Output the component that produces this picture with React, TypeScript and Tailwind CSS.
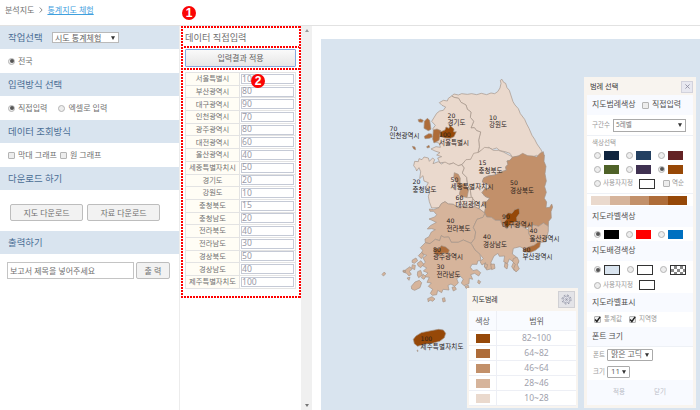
import React from "react";

const SANS = "font-['Noto_Sans','Noto_Sans_CJK_KR',sans-serif]";

function Radio({ on = false }: { on?: boolean }) {
  return (
    <span className="flex size-[7px] shrink-0 items-center justify-center rounded-full border border-[#b4b4b4] bg-[#ededed]">
      {on && <span className="size-[4px] shrink-0 rounded-full bg-[#555]" />}
    </span>
  );
}

function Check({ on = false }: { on?: boolean }) {
  return (
    <span className="flex size-[7px] shrink-0 items-center justify-center rounded-[1px] border border-[#b4b4b4] bg-[#ededed]">
      {on && (
        <svg viewBox="0 0 8 8" className="size-[7px] shrink-0">
          <path d="M1.2 4 3.3 6.3 7 1" fill="none" stroke="#222" strokeWidth="1.6" />
        </svg>
      )}
    </span>
  );
}

function Caret() {
  return (
    <svg viewBox="0 0 4 4" className="size-[4px] shrink-0">
      <path d="M0 .3H4L2 4Z" fill="#333" />
    </svg>
  );
}

function Band({ children, h }: { children: React.ReactNode; h: string }) {
  return (
    <div className={`flex shrink-0 items-center bg-[#d9e4ef] pl-2 text-[9.4px] text-[#4a6d94] ${h}`}>
      {children}
    </div>
  );
}

function Button({ children, w }: { children: React.ReactNode; w: string }) {
  return (
    <button className={`flex h-[17px] items-center justify-center rounded-[2px] border border-[#bdbdbd] bg-[#f2f2f2] text-[8px] text-[#707070] ${w}`}>
      {children}
    </button>
  );
}

function Sidebar() {
  return (
    <aside className="flex w-[180px] shrink-0 flex-col border-r border-[#ececec] text-[8px] text-[#707070]">
      <Band h="h-[23px]">
        <span className="w-[44px]">작업선택</span>
        <span className="flex h-[11px] w-[67px] items-center justify-between border border-[#b9b9b9] bg-white pr-[3px] pl-[2px] text-[8px] text-[#606060]">
          시도 통계체험 <Caret />
        </span>
      </Band>
      <div className="flex h-[24px] items-center gap-[3px] pl-[8px]"><Radio on />전국</div>
      <Band h="h-[23px]">입력방식 선택</Band>
      <div className="flex h-[24px] items-center gap-[3px] pl-[8px]">
        <Radio on />직접입력
        <span className="w-[5px]" />
        <Radio />엑셀로 입력
      </div>
      <Band h="h-[23px]">데이터 조회방식</Band>
      <div className="flex h-[24px] items-center gap-[3px] pl-[8px]">
        <Check />막대 그래프
        <Check />원 그래프
      </div>
      <Band h="h-[23px]">다운로드 하기</Band>
      <div className="flex h-[41px] items-center gap-1 pt-[4px] pl-[10px]">
        <Button w="w-[73px]">지도 다운로드</Button>
        <Button w="w-[73px]">자료 다운로드</Button>
      </div>
      <Band h="h-[23px]">출력하기</Band>
      <div className="flex h-[33px] items-center gap-[2px] pl-[7px]">
        <div className="flex h-[17px] w-[127px] items-center border border-[#c4c4c4] pl-[2px] text-[8px]">보고서 제목을 넣어주세요</div>
        <Button w="w-[34px]">출 력</Button>
      </div>
    </aside>
  );
}

const cities: [string, number][] = [
  ["서울특별시", 100], ["부산광역시", 80], ["대구광역시", 90], ["인천광역시", 70],
  ["광주광역시", 80], ["대전광역시", 60], ["울산광역시", 40], ["세종특별자치시", 50],
  ["경기도", 20], ["강원도", 10], ["충청북도", 15], ["충청남도", 20], ["전라북도", 40],
  ["전라남도", 30], ["경상북도", 50], ["경상남도", 40], ["제주특별자치도", 100],
];

const H_DOTS = "absolute inset-x-0 h-[2px] bg-[repeating-linear-gradient(90deg,#ff0000_0_2px,#ffffff_2px_3px)]";
const V_DOTS = "absolute inset-y-0 w-[2px] bg-[repeating-linear-gradient(180deg,#ff0000_0_2px,#ffffff_2px_3px)]";

function DataInput() {
  return (
    <section className="relative w-[121px] shrink-0 px-[5px]">
      <div className="flex h-[23px] items-center pt-px text-[9.2px] text-[#707070]">데이터 직접입력</div>
      <button className="flex h-[18px] w-[111px] items-center justify-center rounded-[1px] border border-[#86a7dd] bg-linear-to-b from-[#fafafa] to-[#e6e6e6] text-[8px] text-[#606060]">
        입력결과 적용
      </button>
      <div className="mt-[5px] h-[217px] w-[111px] border-t border-l border-[#e3e3e3]">
        {cities.map(([name, value]) => (
          <div key={name} className="flex h-[12.7px] border-r border-b border-[#e3e3e3]">
            <div className="flex w-[54px] items-center justify-center border-r border-[#e3e3e3] bg-[#fffdf5] text-[7.3px] whitespace-nowrap text-[#707070]">
              {name}
            </div>
            <div className="flex flex-1 items-center px-px">
              <div className="flex h-[10px] w-full items-center border border-[#c5cad6] text-[8.6px] text-[#9a9aa8]">{value}</div>
            </div>
          </div>
        ))}
      </div>
      <div className="pointer-events-none absolute top-0 left-[1px] h-[272px] w-[120px]">
        <i className={`${H_DOTS} top-0`} />
        <i className={`${H_DOTS} top-[20px]`} />
        <i className={`${H_DOTS} top-[42px]`} />
        <i className={`${H_DOTS} bottom-0`} />
        <i className={`${V_DOTS} left-0`} />
        <i className={`${V_DOTS} right-0`} />
      </div>
      <Badge n={1} pos="-top-[20px] left-[2px]" />
      <Badge n={2} pos="top-[48px] left-[71px]" />
    </section>
  );
}

function Badge({ n, pos }: { n: number; pos: string }) {
  return (
    <span className={`absolute flex size-[14px] items-center justify-center rounded-full bg-[#fa0505] font-['Liberation_Sans',sans-serif] text-[12px] font-bold text-white ${pos}`}>
      {n}
    </span>
  );
}

const C1 = "#ead9cd";
const C2 = "#d6b49b";
const C3 = "#c2906a";
const C4 = "#ae6c39";
const C5 = "#964808";

const labels: [number, number, string, string, number][] = [
  [447.5, 117.7, "20", "경기도", 18], [489, 119.7, "10", "강원도", 18],
  [389.5, 130.7, "70", "인천광역시", 30], [439, 137.2, "100", "서울특별시", 30],
  [478.5, 165, "15", "충청북도", 24], [412.5, 184.2, "20", "충청남도", 24],
  [450.5, 181.6, "50", "세종특별자치시", 43], [455.5, 199.7, "60", "대전광역시", 31],
  [510, 185.2, "50", "경상북도", 24], [446.5, 223.2, "40", "전라북도", 24],
  [502, 218.8, "90", "대구광역시", 31], [529.5, 232.8, "40", "울산광역시", 30],
  [483, 239.2, "40", "경상남도", 24], [433, 251.5, "80", "광주광역시", 30],
  [522.5, 251.5, "80", "부산광역시", 30], [436.5, 268.8, "30", "전라남도", 24],
  [420.5, 341, "100", "제주특별자치도", 43],
];

function KoreaMap() {
  return (
    <svg className="h-[371px] w-[379px]" viewBox="321 39 379 371">
      <g stroke="#a39387" strokeWidth="2" strokeLinejoin="round">
        <g transform="translate(380 60) scale(.33333)">
          <path fill={C1} d="M215 108 222 102 235 105 245 101 262 103 275 101 290 104 304 100 320 104 333 99 344 101 353 95 360 84 363 70 361 61 366 58 371 67 377 70 381 83 388 91 399 125 405 135 415 146 421 161 434 178 440 192 447 205 456 226 464 238 471 252 483 269 487 278 494 288 482 295 470 286 455 292 435 286 415 288 398 293 390 280 375 275 360 272 350 264 337 268 325 262 315 272 300 273 294 278 298 260 296 240 302 216 290 212 283 203 273 204 281 184 271 172 273 156 262 148 258 135 243 127 236 115 222 112Z" />
          <path fill={C1} d="M215 108 222 112 236 115 243 127 258 135 262 148 273 156 271 172 281 184 273 204 283 203 290 212 302 216 296 240 298 260 294 278 281 293 268 300 256 303 245 314 232 318 220 309 205 313 190 307 180 309 173 294 185 290 170 285 180 278 165 273 153 267 168 260 181 262 178 250 162 244 172 225 158 207 166 196 155 184 170 160 179 153 190 151 197 141 186 136 178 128 190 121 202 123 205 115Z" />
          <path fill={C4} d="M133 184 142 175 149 181 153 208 145 212 132 205ZM114 179 122 177 130 181 127 187 117 186ZM133 229 146 221 155 222 157 231 148 235 135 236ZM160 210 171 207 183 212 180 225 177 241 162 249 158 237ZM97 259 105 261 107 269 101 267ZM140 260 147 256 149 262 142 264Z" />
          <path fill={C5} d="M181 216 195 210 198 201 207 205 210 196 216 202 222 207 221 216 229 215 222 230 211 235 195 234 180 229Z" />
        </g>
        <g transform="translate(380 150) scale(.33333)">
          <path fill={C1} d="M107 55 101 47 104 34 115 35 117 26 126 29 132 21 145 24 148 34 158 24 164 29 159 41 175 35 184 42 195 36 208 43 220 39 235 47 246 44 253 54 247 69 260 82 263 105 271 120 274 140 285 154 284 170 268 173 250 169 235 174 220 163 205 162 195 155 184 161 177 173 155 174 148 155 145 139 150 124 138 111 145 98 132 93 129 77 119 86 122 65 117 53 110 63Z" />
          <path fill={C1} d="M246 44 258 29 272 28 281 10 296 7 314 -8 329 -6 340 1 355 1 370 6 385 14 398 21 390 31 381 33 384 43 377 51 379 61 365 65 360 70 345 75 325 78 311 84 307 96 325 104 330 115 314 117 306 128 315 139 329 145 320 155 308 156 317 170 315 190 300 178 284 170 285 154 274 140 271 120 263 105 260 82 247 69 253 54Z" />
          <path fill={C3} d="M398 21 415 18 428 10 443 17 458 18 470 21 480 10 490 5 493 20 492 34 498 49 495 71 499 93 494 110 499 127 493 145 500 156 498 173 509 172 515 162 518 171 513 185 514 204 506 214 505 229 490 219 476 229 460 225 445 232 433 233 422 227 405 232 395 224 380 236 366 225 361 211 346 211 334 202 320 201 313 190 317 170 308 156 320 155 329 145 315 139 306 128 314 117 330 115 325 104 307 96 311 84 325 78 345 75 365 65 379 61 377 51 384 43 381 33 390 31Z" />
          <path fill={C2} d="M148 177 160 179 177 173 184 161 195 155 205 162 220 163 235 174 250 169 268 173 284 170 300 178 315 190 309 202 291 208 280 232 287 246 284 266 273 280 250 270 235 277 214 277 206 261 192 262 184 257 179 272 166 268 150 281 136 278 135 267 147 260 154 246 166 239 155 236 142 237 151 227 169 217 154 210 147 207 164 201 170 194 161 184 150 184Z" />
          <path fill={C2} d="M315 190 320 201 334 202 346 211 361 211 366 225 380 236 395 224 405 232 422 227 433 233 445 240 447 252 456 266 470 271 480 275 472 288 453 290 440 300 420 290 400 295 397 312 408 320 416 336 408 349 403 362 395 350 401 336 388 327 382 341 371 335 374 318 358 319 354 310 342 318 333 337 336 356 320 360 314 350 317 338 306 345 300 335 310 326 300 313 285 300 273 280 284 266 287 246 280 232 291 208 309 202Z" />
          <path fill={C2} d="M445 232 460 225 476 229 490 219 505 229 505 244 501 260 499 275 484 277 470 271 456 266 447 252Z" />
          <path fill={C3} d="M223 68 235 73 241 85 240 99 255 104 266 118 261 143 245 145 238 132 241 119 232 107 229 92 221 83Z" />
          <path fill={C1} d="M241 143 250 140 262 143 278 142 276 160 262 168 247 167 242 156Z" />
          <path fill={C4} d="M448 290 462 286 474 277 482 275 479 291 466 301 452 307 432 306 430 298Z" />
          <path fill={C5} d="M370 218 380 207 376 197 384 188 396 190 404 179 417 175 419 190 410 202 411 214 393 220 382 234 374 226Z" />
        </g>
        <g transform="translate(400 225) scale(.33333)">
          <path fill={C2} d="M76 53 90 56 106 43 119 47 124 32 132 37 146 36 154 52 175 52 190 45 213 55 225 75 240 88 243 106 233 108 231 118 216 118 211 127 219 137 231 134 242 143 236 153 224 145 212 149 218 163 208 160 207 176 192 182 184 174 190 162 181 154 170 161 175 174 164 184 153 177 144 181 147 195 129 193 125 203 113 196 110 209 97 211 91 205 98 193 85 184 94 174 81 172 88 157 73 155 84 144 70 138 80 129 66 121 76 112 69 99 80 91 64 85 68 76 61 68Z" />
          <path fill={C2} d="M37 105 48 99 53 107 43 115 36 112ZM55 92 65 82 72 91 64 101ZM52 115 63 107 71 118 62 128 54 122ZM17 134 30 125 36 133 28 139 34 148 27 153 20 145 10 141ZM37 119 46 121 44 134 35 129ZM53 140 62 136 67 150 56 158 52 150ZM70 148 77 155 72 163 64 158ZM34 184 45 171 58 166 65 173 60 188 44 196 35 192ZM83 221 96 215 105 222 98 229 90 225 85 231ZM127 220 134 218 136 229 129 231ZM9 136 17 136 16 142 9 141ZM21 159 30 157 27 166ZM235 165 242 170 238 177 233 173ZM340 101 351 96 357 108 352 119 358 132 348 141 341 131 346 118 338 110ZM315 113 324 118 321 132 313 126ZM272 118 283 117 285 130 275 134ZM254 116 263 119 260 130 253 126ZM156 187 165 185 169 193 160 198ZM195 184 205 181 207 188 198 190Z" />
          <path fill={C4} d="M102 67 116 72 124 62 137 66 148 75 145 85 127 84 119 91 103 86Z" />
        </g>
        <g transform="translate(380 260) scale(.33333)">
          <path fill={C5} d="M100 238 108 228 124 218 153 212 176 208 190 210 197 220 193 233 179 244 157 250 131 253 113 259 103 251Z" />
          <path fill={C2} d="M6 43 13 36 17 42 10 48ZM111 270 114 271 113 275Z" />
        </g>
      </g>
      {labels.map(([x, y, value, name, len]) => (
        <g key={name} fill="#2a221b">
          <text x={x} y={y} fontSize="6.2" fontFamily="DejaVu Sans, sans-serif">{value}</text>
          <text x={x} y={y + 7.7} fontSize="6.5" textLength={len} fontFamily="Noto Sans CJK KR, sans-serif">{name}</text>
        </g>
      ))}
    </svg>
  );
}

const ranges: [string, string][] = [
  ["82~100", "bg-[#964808]"], ["64~82", "bg-[#ae6c39]"], ["46~64", "bg-[#c2906a]"],
  ["28~46", "bg-[#d6b49b]"], ["10~28", "bg-[#ead9cd]"],
];

function Legend() {
  return (
    <div className="absolute top-[249px] left-[146px] flex h-[120px] w-[111px] flex-col bg-[#f8f4ef] px-[2px] pb-[2px] text-[8.5px] text-[#a0a1ac]">
      <div className="flex h-[23px] shrink-0 items-center justify-between pr-px pl-[3px] text-[7px] text-[#333]">
        지도범례
        <span className="flex size-[17px] items-center justify-center border border-[#d0d0d4] bg-[#e4e4e8]">
          <svg viewBox="0 0 20 20" className="size-[11px]" fill="none" stroke="#8a8da0" strokeWidth="1.2">
            <circle cx="10" cy="10" r="6" fill="#f4f4f8" />
            <circle cx="10" cy="10" r="8.2" strokeDasharray="3.2 3.24" strokeWidth="1.8" />
            <circle cx="10" cy="10" r="3" />
            <circle cx="10" cy="10" r=".8" fill="#555" />
          </svg>
        </span>
      </div>
      <div className="flex h-[20px] shrink-0 items-center border-b border-[#edeff5] bg-[#f9fbff] text-[8px] text-[#606060]">
        <span className="flex h-full w-[28px] items-center justify-center border-r border-[#edeff5]">색상</span>
        <span className="flex-1 text-center">범위</span>
      </div>
      {ranges.map(([label, bg]) => (
        <div key={label} className="flex h-[15px] shrink-0 items-center border-b border-[#edeff5] bg-white">
          <span className="flex h-full w-[28px] items-center justify-center border-r border-[#edeff5]">
            <i className={`h-[9px] w-[14px] ${bg}`} />
          </span>
          <span className="flex-1 text-center">{label}</span>
        </div>
      ))}
    </div>
  );
}

function Swatch({ bg, on = false }: { bg: string; on?: boolean }) {
  return (
    <span className="flex w-[32px] items-center gap-[3px]">
      <Radio on={on} />
      <i className={`h-[9px] w-[15px] ${bg}`} />
    </span>
  );
}

function Head({ children, h }: { children: React.ReactNode; h: string }) {
  return (
    <div className={`flex shrink-0 items-center bg-[#f8faff] pl-[5px] text-[7.9px] text-[#505050] ${h}`}>{children}</div>
  );
}

const ROW = "flex shrink-0 items-center pl-[7px]";

function Settings() {
  return (
    <div className="absolute top-[38px] left-[263px] flex h-[331px] w-[112px] flex-col bg-[#f8f4ef] px-[3px] pb-[3px] text-[6.5px] whitespace-nowrap text-[#999]">
      <div className="flex h-[18px] shrink-0 items-center justify-between pt-px pl-[3px] text-[7.2px] text-[#333]">
        범례 선택
        <span className="flex size-[12px] items-center justify-center border border-[#d2d2dc] bg-[#e8e8f0]">
          <svg viewBox="0 0 6 6" className="size-[5px]" stroke="#8a8a9c" strokeWidth="1"><path d="M.5.5l5 5M5.5.5l-5 5" /></svg>
        </span>
      </div>
      <Head h="h-[20px]"><span className="w-[50px]">지도범례색상</span><Check /><span className="ml-[3px]">직접입력</span></Head>
      <div className="flex h-[20px] shrink-0 items-center bg-white pl-[5px]">
        <span className="w-[21px]">구간수</span>
        <span className="flex h-[13px] w-[73px] items-center justify-between border border-[#aaa] pr-[3px] pl-[2px] text-[#777]">5레벨 <Caret /></span>
      </div>
      <div className="flex h-[58px] shrink-0 flex-col border-t border-[#eef1f6] bg-white">
        <div className="flex h-[12px] items-center pt-[2px] pl-[5px]">색상선택</div>
        <div className={`${ROW} h-[14px]`}><Swatch bg="bg-[#0f243e]" /><Swatch bg="bg-[#244061]" /><Swatch bg="bg-[#632224]" /></div>
        <div className={`${ROW} h-[14px]`}><Swatch bg="bg-[#4f6228]" /><Swatch bg="bg-[#3f3151]" /><Swatch bg="bg-[#974806]" on /></div>
        <div className={`${ROW} h-[15px]`}>
          <Radio /><span className="ml-[2px] w-[36px]">사용자지정</span>
          <i className="mr-[8px] h-[10px] w-[16px] border border-[#333]" />
          <Check /><span className="ml-[2px]">역순</span>
        </div>
      </div>
      <div className="flex h-[13px] shrink-0 items-center border-t border-[#eef1f6] bg-white pl-[4px]">
        {ranges.slice().reverse().map(([label, bg]) => <i key={label} className={`h-[9px] w-[19.3px] ${bg}`} />)}
      </div>
      <Head h="h-[21px]">지도라벨색상</Head>
      <div className={`${ROW} h-[14px] bg-white`}><Swatch bg="bg-black" on /><Swatch bg="bg-[#ff0000]" /><Swatch bg="bg-[#0070c0]" /></div>
      <Head h="h-[20px]">지도배경색상</Head>
      <div className="flex h-[32px] shrink-0 flex-col bg-white pt-px">
        <div className={`${ROW} h-[15px]`}>
          <Radio on /><i className="mr-[7px] ml-[3px] h-[10px] w-[16px] border border-[#333] bg-[#d9e4ef]" />
          <Radio /><i className="mr-[7px] ml-[3px] h-[10px] w-[16px] border border-[#333]" />
          <Radio /><i className="ml-[3px] h-[10px] w-[16px] border border-[#333] bg-[repeating-conic-gradient(#888_0_25%,#fff_0_50%)] bg-size-[6px_6px]" />
        </div>
        <div className={`${ROW} h-[16px]`}>
          <Radio /><span className="ml-[2px] w-[36px]">사용자지정</span><i className="h-[10px] w-[16px] border border-[#333]" />
        </div>
      </div>
      <Head h="h-[19px]">지도라벨표시</Head>
      <div className={`${ROW} h-[15px] bg-white`}>
        <Check on /><span className="ml-[3px] w-[25px]">통계값</span><Check on /><span className="ml-[3px]">지역명</span>
      </div>
      <Head h="h-[19px]">폰트 크기</Head>
      <div className="flex h-[34px] shrink-0 flex-col justify-around border-t border-[#eef1f6] bg-white pl-[6px]">
        <div className="flex items-center">
          <span className="w-[14px]">폰트</span>
          <span className="flex h-[12px] w-[46px] items-center justify-between rounded-[1px] border border-[#aaa] pr-[3px] pl-[3px] text-[7.9px] text-[#666]">맑은 고딕 <Caret /></span>
        </div>
        <div className="flex items-center">
          <span className="w-[14px]">크기</span>
          <span className="flex h-[12px] w-[23px] items-center justify-between rounded-[1px] border border-[#aaa] pr-[3px] pl-[3px] text-[7.9px] text-[#666]">11 <Caret /></span>
        </div>
      </div>
      <div className="flex flex-1 items-center bg-[#f8faff] pl-[26px] text-[#b9bcc6]">
        <span className="w-[41px]">적용</span><span>닫기</span>
      </div>
    </div>
  );
}

export default function App() {
  return (
    <div className={`flex h-[410px] w-[700px] flex-col overflow-hidden bg-white leading-none whitespace-nowrap ${SANS}`}>
      <header className="flex h-[26px] shrink-0 items-center border-b border-[#e2e2e2] pb-[6px] pl-[5px] text-[8px] text-[#707070]">
        분석지도
        <svg viewBox="0 0 4 7" className="mr-[4px] ml-[5px] h-[6px] w-[4px]" fill="none" stroke="#777"><path d="M.5.5 3.3 3.5.5 6.5" /></svg>
        <a className="text-[#3fa0de] underline underline-offset-1">통계지도 체험</a>
      </header>
      <div className="flex h-[384px]">
        <Sidebar />
        <DataInput />
        <div className="flex w-[11px] shrink-0 flex-col items-center justify-between bg-[#f0f0f0] py-[3px]">
          <svg viewBox="0 0 4 3" className="h-[3px] w-[4px]"><path d="M0 3H4L2 0Z" fill="#999" /></svg>
          <svg viewBox="0 0 4 3" className="h-[3px] w-[4px]"><path d="M0 0H4L2 3Z" fill="#777" /></svg>
        </div>
        <main className="relative mt-[13px] ml-[9px] h-[371px] w-[379px] bg-[#d9e4ef]">
          <KoreaMap />
          <Legend />
          <Settings />
        </main>
      </div>
    </div>
  );
}
